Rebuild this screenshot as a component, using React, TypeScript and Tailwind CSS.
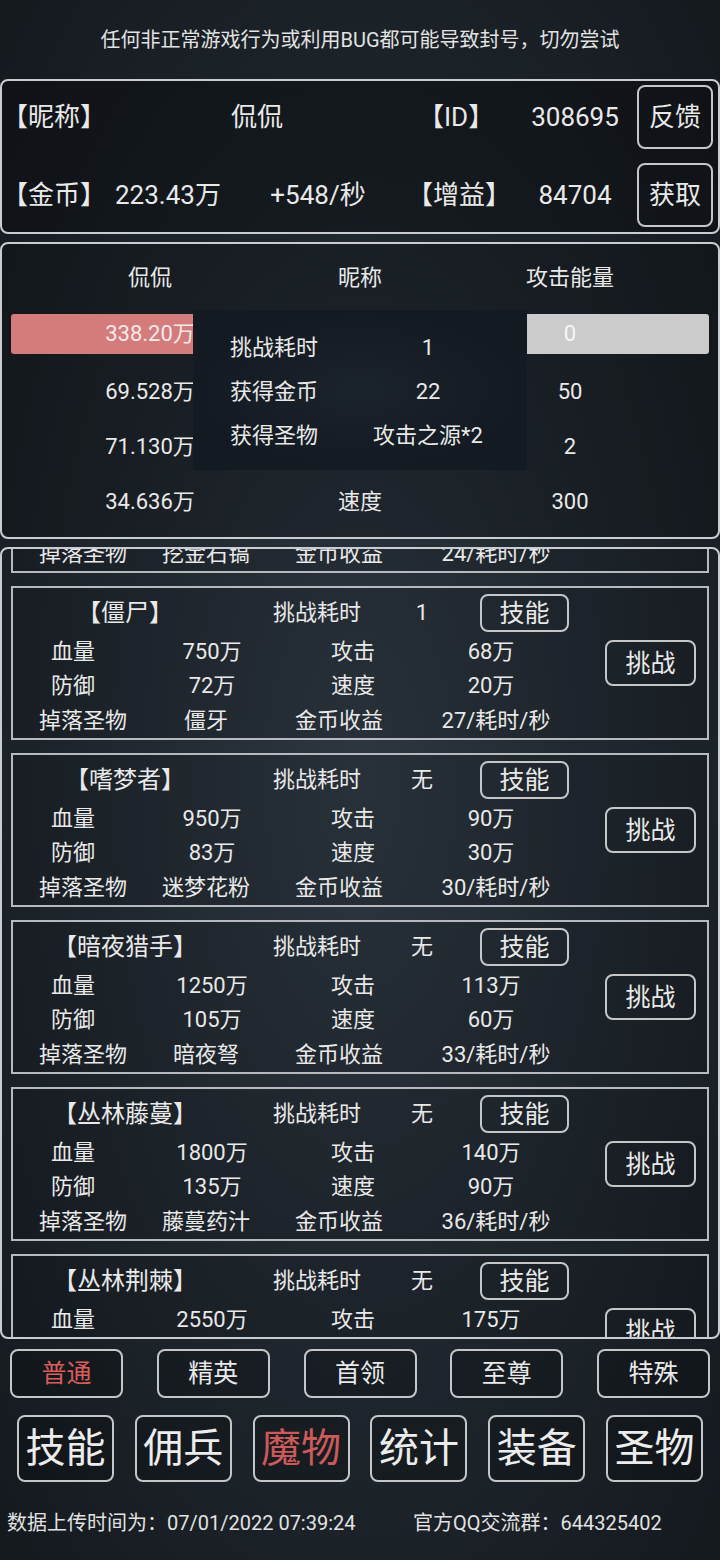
import React from "react";

type M = {
  name: string;
  time: string;
  hp: string;
  atk: string;
  def: string;
  spd: string;
  drop: string;
  gold: string;
};

const monsters: M[] = [
  { name: "矿坑哥布林", time: "1", hp: "560万", atk: "50万", def: "55万", spd: "15万", drop: "挖金石镐", gold: "24/耗时/秒" },
  { name: "僵尸", time: "1", hp: "750万", atk: "68万", def: "72万", spd: "20万", drop: "僵牙", gold: "27/耗时/秒" },
  { name: "嗜梦者", time: "无", hp: "950万", atk: "90万", def: "83万", spd: "30万", drop: "迷梦花粉", gold: "30/耗时/秒" },
  { name: "暗夜猎手", time: "无", hp: "1250万", atk: "113万", def: "105万", spd: "60万", drop: "暗夜弩", gold: "33/耗时/秒" },
  { name: "丛林藤蔓", time: "无", hp: "1800万", atk: "140万", def: "135万", spd: "90万", drop: "藤蔓药汁", gold: "36/耗时/秒" },
  { name: "丛林荆棘", time: "无", hp: "2550万", atk: "175万", def: "160万", spd: "120万", drop: "荆棘之刺", gold: "39/耗时/秒" },
];

function Card({ m }: { m: M }) {
  return (
    <div className="flex h-[154px] shrink-0 border-2 border-[#b6babe] bg-black/10">
      <div className="flex w-[580px] flex-col pt-[5px] text-[22px]">
        <div className="flex h-[40px] items-center">
          <div className="w-[224px] text-center text-[24px]">【{m.name}】</div>
          <div className="w-[160px] text-center">挑战耗时</div>
          <div className="w-[50px] text-center">{m.time}</div>
          <div className="ml-[33px] flex h-[38px] w-[89px] items-center justify-center rounded-[8px] border-2 border-[#c4c6c8] text-[25px]">
            技能
          </div>
        </div>
        <div className="mt-[2px] flex h-[34px] items-center">
          <div className="w-[120px] text-center">血量</div>
          <div className="w-[158px] text-center">{m.hp}</div>
          <div className="w-[124px] text-center">攻击</div>
          <div className="w-[152px] text-center">{m.atk}</div>
        </div>
        <div className="flex h-[34px] items-center">
          <div className="w-[120px] text-center">防御</div>
          <div className="w-[158px] text-center">{m.def}</div>
          <div className="w-[124px] text-center">速度</div>
          <div className="w-[152px] text-center">{m.spd}</div>
        </div>
        <div className="mt-[1px] flex h-[34px] items-center">
          <div className="w-[140px] text-center">掉落圣物</div>
          <div className="w-[106px] text-center">{m.drop}</div>
          <div className="w-[160px] text-center">金币收益</div>
          <div className="w-[154px] text-center">{m.gold}</div>
        </div>
      </div>
      <div className="flex flex-1 items-center">
        <div className="ml-[12px] flex h-[46px] w-[91px] items-center justify-center rounded-[8px] border-2 border-[#c4c6c8] text-[25px]">
          挑战
        </div>
      </div>
    </div>
  );
}

export default function App() {
  const tabs = ["普通", "精英", "首领", "至尊", "特殊"];
  const navs = ["技能", "佣兵", "魔物", "统计", "装备", "圣物"];
  return (
    <div className="flex h-[1560px] w-[720px] flex-col overflow-hidden bg-[radial-gradient(ellipse_at_50%_50%,#2d3740_0%,#1e252c_55%,#14191e_100%)] font-['Roboto','Noto_Sans_CJK_SC',sans-serif] leading-none text-[#e9e9e9]">
      {/* notice */}
      <div className="flex h-[79px] shrink-0 items-center justify-center text-[20px] text-[#e2e2e2]">
        任何非正常游戏行为或利用BUG都可能导致封号，切勿尝试
      </div>

      {/* player panel */}
      <div className="flex h-[155px] shrink-0 flex-col rounded-[8px] border-2 border-[#c9ccd0] bg-black/30 pt-[4px] text-[26px]">
        <div className="flex h-[64px] items-center">
          <div className="w-[104px] text-center">【昵称】</div>
          <div className="w-[302px] text-center">侃侃</div>
          <div className="w-[112px] pl-[10px]">【ID】</div>
          <div className="w-[110px] text-center">308695</div>
          <div className="ml-[7px] flex h-[64px] w-[76px] items-center justify-center rounded-[8px] border-2 border-[#c4c6c8]">
            反馈
          </div>
        </div>
        <div className="mt-[14px] flex h-[64px] items-center">
          <div className="w-[104px] text-center">【金币】</div>
          <div className="w-[132px] pl-[9px]">223.43万</div>
          <div className="w-[160px] text-center">+548/秒</div>
          <div className="w-[122px] text-center">【增益】</div>
          <div className="w-[110px] text-center">84704</div>
          <div className="ml-[7px] flex h-[64px] w-[76px] items-center justify-center rounded-[8px] border-2 border-[#c4c6c8]">
            获取
          </div>
        </div>
      </div>

      {/* battle panel */}
      <div className="relative mt-[8px] flex h-[297px] shrink-0 flex-col rounded-[8px] border-2 border-[#c9ccd0] bg-black/20 px-[9px] text-[22px]">
        <div className="flex h-[68px] items-center">
          <div className="w-[278px] text-center">侃侃</div>
          <div className="w-[142px] text-center">昵称</div>
          <div className="w-[278px] text-center">攻击能量</div>
        </div>
        <div className="mt-[2px] flex h-[40px] items-center">
          <div className="flex h-[40px] w-[278px] items-center justify-center rounded-[3px] bg-[#d47b7b] text-[#f4eaea]">
            338.20万
          </div>
          <div className="w-[142px]" />
          <div className="flex h-[40px] w-[278px] items-center justify-center rounded-[3px] bg-[#cbcbcb] text-[#f6f6f6]">
            0
          </div>
        </div>
        <div className="mt-[10px] flex h-[56px] items-center">
          <div className="w-[278px] text-center">69.528万</div>
          <div className="w-[142px]" />
          <div className="w-[278px] text-center">50</div>
        </div>
        <div className="flex h-[54px] items-center">
          <div className="w-[278px] text-center">71.130万</div>
          <div className="w-[142px]" />
          <div className="w-[278px] text-center">2</div>
        </div>
        <div className="flex h-[56px] items-center">
          <div className="w-[278px] text-center">34.636万</div>
          <div className="w-[142px] text-center">速度</div>
          <div className="w-[278px] text-center">300</div>
        </div>

        {/* result popup */}
        <div className="absolute left-[191px] top-[66px] flex h-[160px] w-[334px] flex-col bg-[radial-gradient(ellipse_at_50%_50%,#1b232b_0%,#131a21_70%)] pt-[16px]">
          {[
            ["挑战耗时", "1"],
            ["获得金币", "22"],
            ["获得圣物", "攻击之源*2"],
          ].map(([k, v]) => (
            <div key={k} className="flex h-[44px] items-center">
              <div className="w-[168px] pl-[37px]">{k}</div>
              <div className="w-[134px] text-center">{v}</div>
            </div>
          ))}
        </div>
      </div>

      {/* monster list */}
      <div className="mt-[8px] h-[792px] shrink-0 overflow-hidden rounded-[8px] border-2 border-[#c9ccd0]">
        <div className="-mt-[130px] flex flex-col gap-[13px] px-[9px]">
          {monsters.map((m) => (
            <Card key={m.name} m={m} />
          ))}
        </div>
      </div>

      {/* difficulty tabs */}
      <div className="mt-[10px] flex h-[49px] shrink-0 justify-between px-[10px]">
        {tabs.map((t, i) => (
          <div
            key={t}
            className={
              "flex h-[49px] w-[113px] items-center justify-center rounded-[8px] border-2 border-[#c4c6c8] bg-black/20 text-[25px] " +
              (i === 0 ? "text-[#d95d5b]" : "text-[#e9e9e9]")
            }
          >
            {t}
          </div>
        ))}
      </div>

      {/* main nav */}
      <div className="mt-[17px] flex h-[67px] shrink-0 justify-between px-[17px]">
        {navs.map((t, i) => (
          <div
            key={t}
            className={
              "flex h-[67px] w-[97px] items-center justify-center rounded-[8px] border-2 border-[#c4c6c8] bg-black/20 text-[40px] " +
              (i === 2 ? "text-[#cc5a5a]" : "text-[#ececec]")
            }
          >
            {t}
          </div>
        ))}
      </div>

      {/* footer */}
      <div className="mt-[21px] flex h-[40px] shrink-0 items-center text-[20px] text-[#e2e2e2]">
        <div className="w-[413px] pl-[7px]">数据上传时间为：07/01/2022 07:39:24</div>
        <div>官方QQ交流群：644325402</div>
      </div>
    </div>
  );
}
